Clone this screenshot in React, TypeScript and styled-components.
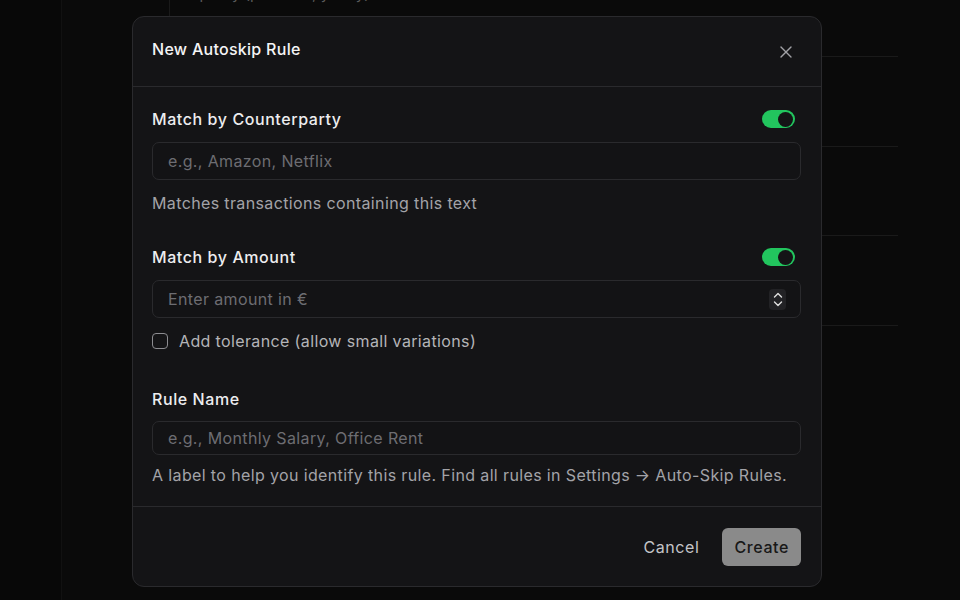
import React from "react";
import styled, { createGlobalStyle } from "styled-components";
import { X } from "lucide-react";

const Global = createGlobalStyle`
  html, body { margin: 0; padding: 0; background: #0a0a0a; }
  body { font-family: Inter, "Noto Sans", "Liberation Sans", sans-serif; -webkit-font-smoothing: antialiased; }
  * { box-sizing: border-box; }
`;

const Page = styled.div`
  position: relative;
  width: 960px;
  height: 600px;
  overflow: hidden;
  display: flex;
  background: #0a0a0a;
`;

const Sidebar = styled.div`
  width: 62px;
  flex: none;
  background: #080808;
  border-right: 1px solid #111111;
`;

const Main = styled.div`
  flex: 1;
  padding-left: 107px;
`;

const Panel = styled.div`
  width: 729px;
  margin-top: -33px;
  border-left: 1px solid #1a1a1a;
`;

const Row = styled.div<{ $h: number }>`
  height: ${(p) => p.$h}px;
  border-bottom: 1px solid #1a1a1a;
  padding: 15px 0 0 20px;
  color: #5a5a5a;
  font-size: 15px;
  line-height: 24px;
`;

const Overlay = styled.div`
  position: absolute;
  inset: 0;
  pointer-events: none;
`;

const Dialog = styled.div`
  position: absolute;
  left: 132px;
  top: 16px;
  width: 690px;
  height: 571px;
  background: #141416;
  border: 1px solid #2a2a2d;
  border-radius: 12px;
  display: flex;
  flex-direction: column;
  pointer-events: auto;
  letter-spacing: 0.37px;
`;

const Header = styled.div`
  display: flex;
  align-items: center;
  justify-content: space-between;
  height: 70px;
  padding: 0 19px 5px 19px;
  border-bottom: 1px solid #2a2a2d;
`;

const Title = styled.h2`
  margin: 0;
  font-size: 16px;
  line-height: 24px;
  font-weight: 550;
  color: #f4f4f5;
  letter-spacing: 0.28px;
`;

const CloseButton = styled.button`
  display: flex;
  align-items: center;
  justify-content: center;
  width: 24px;
  height: 24px;
  padding: 0;
  margin: 5px 4px 0 0;
  background: none;
  border: none;
  color: #a1a1a6;
`;

const Body = styled.div`
  flex: 1;
  padding: 20px 20px 0 19px;
  display: flex;
  flex-direction: column;
`;

const Section = styled.div<{ $mt?: number }>`
  display: flex;
  flex-direction: column;
  margin-top: ${(p) => p.$mt ?? 0}px;
`;

const LabelRow = styled.div`
  display: flex;
  align-items: center;
  justify-content: space-between;
  height: 24px;
`;

const Label = styled.label`
  font-size: 16px;
  line-height: 24px;
  font-weight: 450;
  color: #ededef;
  letter-spacing: 0.58px;
`;

const Toggle = styled.div`
  width: 33px;
  height: 18px;
  border-radius: 9px;
  background: #22c55e;
  display: flex;
  align-items: center;
  justify-content: flex-end;
  padding: 0 2px;
  margin-right: 6px;
`;

const Knob = styled.span`
  width: 15px;
  height: 15px;
  border-radius: 50%;
  background: #141416;
`;

const InputBox = styled.div<{ $h?: number; $mt?: number }>`
  display: flex;
  align-items: center;
  height: ${(p) => p.$h ?? 38}px;
  margin-top: ${(p) => p.$mt ?? 11}px;
  border: 1px solid #2a2a2d;
  border-radius: 7px;
  padding: 0 15px;
  background: #131315;
`;

const Placeholder = styled.span`
  flex: 1;
  font-size: 16px;
  color: #6d6d72;
`;

const Spinner = styled.div`
  width: 17px;
  height: 21px;
  border-radius: 4px;
  background: #222225;
  display: flex;
  align-items: center;
  justify-content: center;
  margin-right: -1px;
`;

const Helper = styled.p<{ $mt?: number }>`
  margin: ${(p) => p.$mt ?? 11}px 0 0;
  font-size: 16px;
  line-height: 24px;
  color: #a3a3a8;
`;

const CheckRow = styled.div`
  display: flex;
  align-items: center;
  gap: 11px;
  height: 24px;
  margin-top: 11px;
`;

const Checkbox = styled.span`
  width: 16px;
  height: 16px;
  border: 1.5px solid #8c8c90;
  border-radius: 4px;
`;

const CheckLabel = styled.span`
  font-size: 16px;
  color: #b4b4b8;
`;

const Footer = styled.div`
  display: flex;
  align-items: center;
  justify-content: flex-end;
  gap: 11px;
  height: 80px;
  padding: 0 20px;
  border-top: 1px solid #2a2a2d;
`;

const Button = styled.button<{ $primary?: boolean }>`
  height: 38px;
  padding: 0 12px;
  border: none;
  border-radius: 6px;
  font-family: inherit;
  font-size: 16px;
  font-weight: ${(p) => (p.$primary ? 480 : 440)};
  letter-spacing: 0.6px;
  background: ${(p) => (p.$primary ? "#8a8a8a" : "transparent")};
  color: ${(p) => (p.$primary ? "#181818" : "#c4c4c8")};
`;

function SpinIcon() {
  return (
    <svg width="10" height="17" viewBox="0 0 10 17" fill="none" stroke="#e0e0e0" strokeWidth="1.4" strokeLinecap="round" strokeLinejoin="round">
      <path d="M1.5 6 L5 2.5 L8.5 6" />
      <path d="M1.5 11 L5 14.5 L8.5 11" />
    </svg>
  );
}

export default function App() {
  return (
    <>
      <Global />
      <Page>
        <Sidebar />
        <Main>
          <Panel>
            <Row $h={90}>Spotify (premium, yearly)</Row>
            <Row $h={90} />
            <Row $h={89} />
            <Row $h={90} />
          </Panel>
        </Main>
        <Overlay>
          <Dialog>
            <Header>
              <Title>New Autoskip Rule</Title>
              <CloseButton aria-label="Close">
                <X size={20} strokeWidth={1.6} />
              </CloseButton>
            </Header>
            <Body>
              <Section>
                <LabelRow>
                  <Label>Match by Counterparty</Label>
                  <Toggle><Knob /></Toggle>
                </LabelRow>
                <InputBox>
                  <Placeholder>e.g., Amazon, Netflix</Placeholder>
                </InputBox>
                <Helper>Matches transactions containing this text</Helper>
              </Section>
              <Section $mt={30}>
                <LabelRow>
                  <Label>Match by Amount</Label>
                  <Toggle><Knob /></Toggle>
                </LabelRow>
                <InputBox>
                  <Placeholder>Enter amount in €</Placeholder>
                  <Spinner><SpinIcon /></Spinner>
                </InputBox>
                <CheckRow>
                  <Checkbox />
                  <CheckLabel>Add tolerance (allow small variations)</CheckLabel>
                </CheckRow>
              </Section>
              <Section $mt={34}>
                <LabelRow>
                  <Label>Rule Name</Label>
                </LabelRow>
                <InputBox $h={34} $mt={10}>
                  <Placeholder>e.g., Monthly Salary, Office Rent</Placeholder>
                </InputBox>
                <Helper $mt={8}>A label to help you identify this rule. Find all rules in Settings → Auto-Skip Rules.</Helper>
              </Section>
            </Body>
            <Footer>
              <Button>Cancel</Button>
              <Button $primary>Create</Button>
            </Footer>
          </Dialog>
        </Overlay>
      </Page>
    </>
  );
}
